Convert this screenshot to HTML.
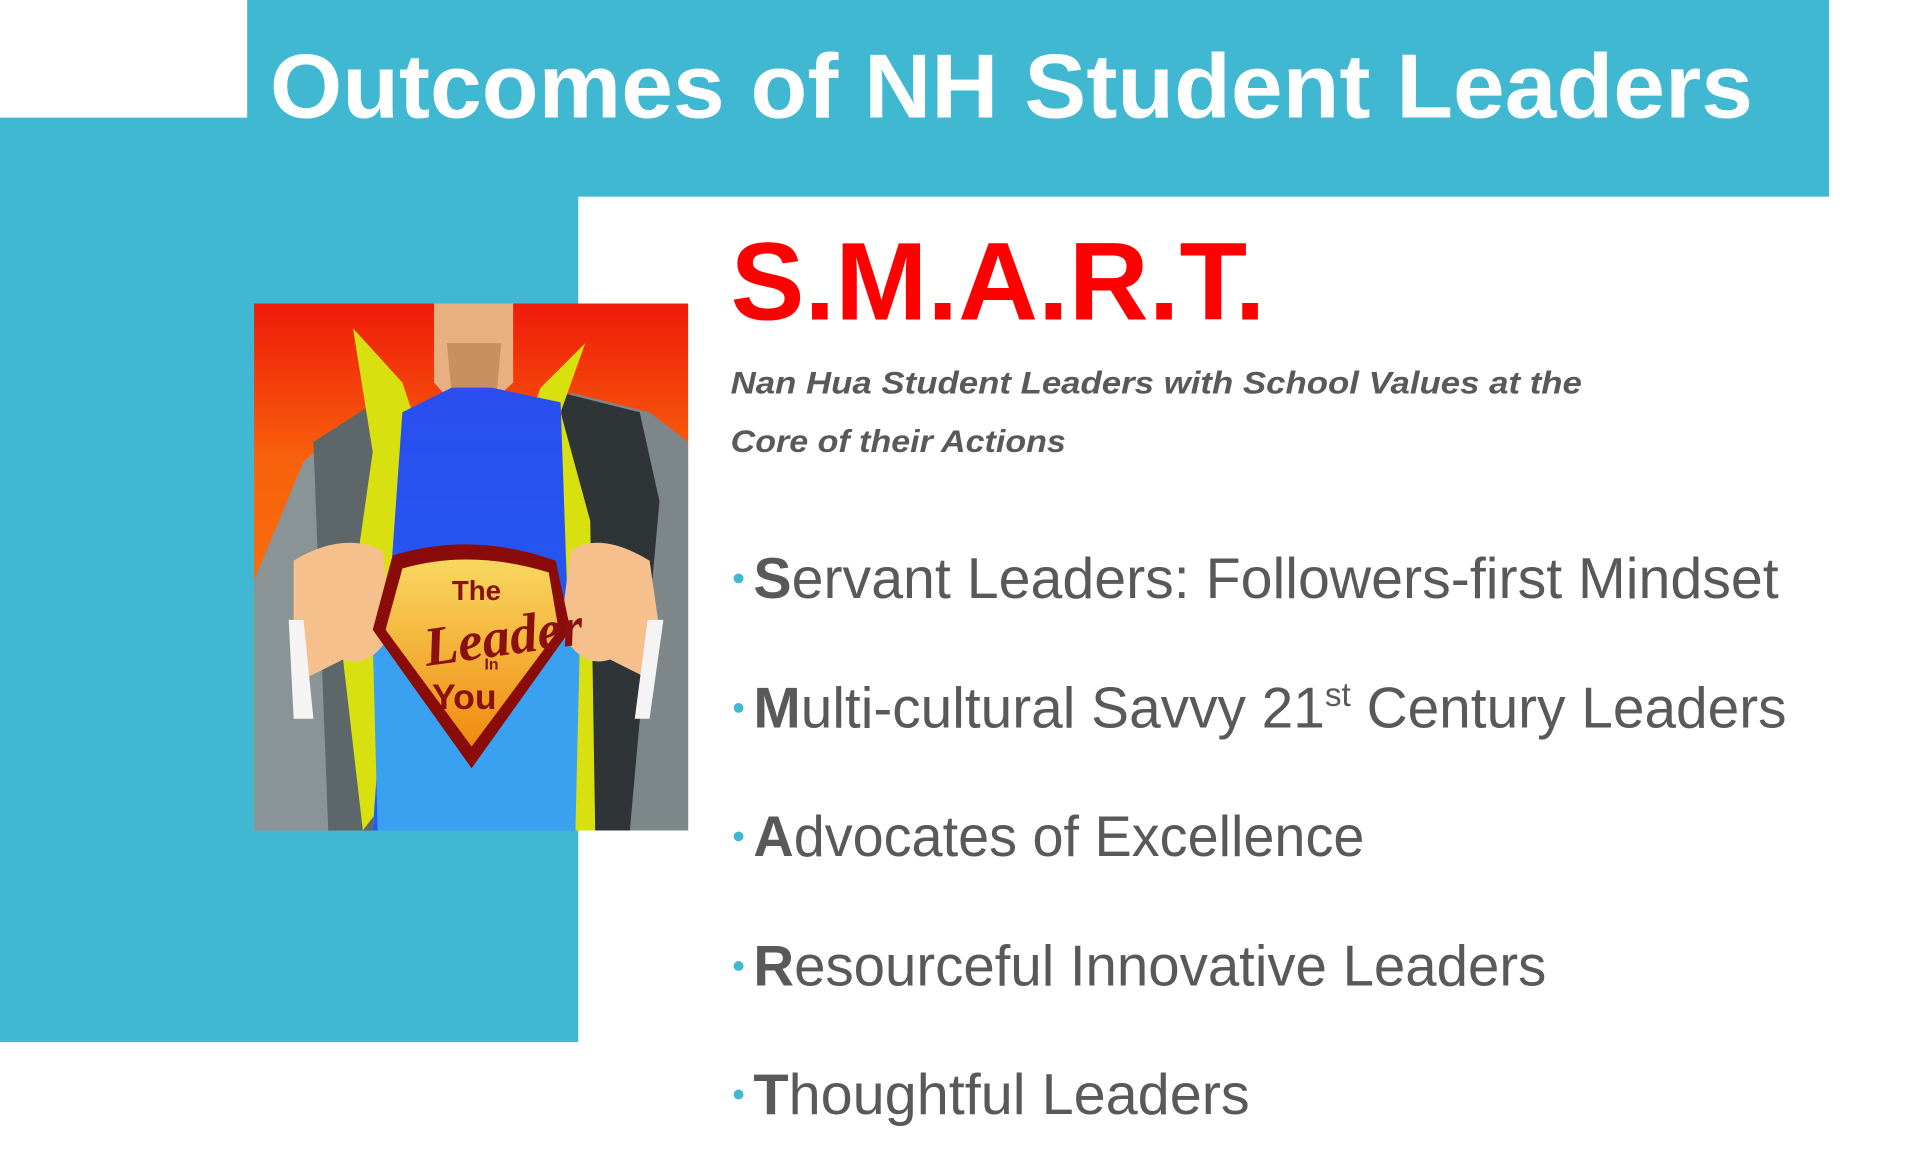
<!DOCTYPE html>
<html><head><meta charset="utf-8"><style>
html,body{margin:0;padding:0;background:#fff;}
svg{display:block}
</style></head><body>
<svg width="1926" height="1159" viewBox="0 0 1926 1159" xmlns="http://www.w3.org/2000/svg">
<rect width="1926" height="1159" fill="#fff"/>
<g transform="scale(0.9887)">
<rect x="250" y="0" width="1600" height="199" fill="#40B8D2"/>
<rect x="0" y="119" width="585" height="935" fill="#40B8D2"/>
<rect x="585" y="199" width="1341" height="960" fill="#fff"/>
<text x="273" y="119" font-family="Liberation Sans, sans-serif" font-weight="bold" font-size="92" fill="#fff" textLength="1500" lengthAdjust="spacingAndGlyphs">Outcomes of NH Student Leaders</text>

<g transform="translate(257,307)">
<defs>
<linearGradient id="bg" x1="0" y1="0" x2="0" y2="1"><stop offset="0" stop-color="#f01a0a"/><stop offset="0.3" stop-color="#f8620c"/><stop offset="1" stop-color="#f88010"/></linearGradient>
<linearGradient id="sh" x1="0" y1="0" x2="0" y2="1"><stop offset="0" stop-color="#2a4ef0"/><stop offset="1" stop-color="#1e60f0"/></linearGradient>
<linearGradient id="bd" x1="0" y1="0" x2="0" y2="1"><stop offset="0" stop-color="#f8d860"/><stop offset="1" stop-color="#f08a10"/></linearGradient>
</defs>
<rect width="439" height="533" fill="url(#bg)"/>
<path d="M0 420 L0 280 L50 160 L120 100 L150 100 L130 533 L0 533 Z" fill="#8a9496"/>
<path d="M60 140 L130 95 L120 533 L75 533 Z" fill="#5d6668"/>
<path d="M439 440 L439 140 L400 110 L320 90 L300 533 L439 533 Z" fill="#7d8789"/>
<path d="M310 90 L390 110 L410 200 L380 533 L330 533 Z" fill="#2f3436"/>
<path d="M100 25 L150 80 L160 110 L135 500 L110 533 L90 360 L120 150 Z" fill="#d8e010"/>
<path d="M335 40 L290 85 L280 110 L320 533 L345 533 L340 220 L310 110 Z" fill="#d8e010"/>
<path d="M182 0 L262 0 L262 80 L240 100 L200 100 L182 80 Z" fill="#e8b080"/>
<path d="M195 40 L250 40 L245 95 L200 95 Z" fill="#c89060"/>
<path d="M150 110 L200 85 L240 85 L310 100 L325 533 L120 533 Z" fill="url(#sh)"/>
<path d="M120 340 L330 320 L325 533 L125 533 Z" fill="#3aa0f0"/>
<path d="M40 260 Q90 230 130 250 L140 330 Q120 370 90 360 L50 380 L40 330 Z" fill="#f5c08c"/>
<path d="M400 260 Q350 230 320 250 L310 330 Q330 370 360 360 L400 380 L410 330 Z" fill="#f5c08c"/>
<path d="M35 320 L50 320 L60 420 L40 420 Z" fill="#f4f4f4"/>
<path d="M398 320 L414 320 L400 420 L385 420 Z" fill="#f4f4f4"/>
<path d="M140 255 Q220 230 305 260 L320 330 L220 470 L120 330 Z" fill="#8a0c0a"/>
<path d="M150 268 Q220 248 298 272 L308 330 L220 448 L133 330 Z" fill="url(#bd)"/>
<text x="170" y="360" font-family="Liberation Serif, serif" font-style="italic" font-weight="bold" font-size="56" fill="#8a1010" transform="rotate(-8 220 330)">Leader</text>
<text x="200" y="300" font-family="Liberation Sans, sans-serif" font-weight="bold" font-size="28" fill="#8a1010">The</text>
<text x="233" y="370" font-family="Liberation Sans, sans-serif" font-weight="bold" font-size="16" fill="#8a1010">In</text>
<text x="180" y="410" font-family="Liberation Sans, sans-serif" font-weight="bold" font-size="36" fill="#8a1010">You</text>
</g>

<text x="739" y="323" font-family="Liberation Sans, sans-serif" font-weight="bold" font-size="112" fill="#ff0000" textLength="541" lengthAdjust="spacingAndGlyphs">S.M.A.R.T.</text>
<g font-family="Liberation Sans, sans-serif" font-weight="bold" font-style="italic" font-size="32" fill="#595959">
<text x="739" y="398" textLength="861" lengthAdjust="spacingAndGlyphs">Nan Hua Student Leaders with School Values at the</text>
<text x="739" y="457" textLength="339" lengthAdjust="spacingAndGlyphs">Core of their Actions</text>
</g>
<g font-family="Liberation Sans, sans-serif" font-size="58" fill="#595959">
<circle cx="747" cy="585" r="5" fill="#40B8D2"/>
<text x="762" y="605" textLength="1037" lengthAdjust="spacingAndGlyphs"><tspan font-weight="bold">S</tspan>ervant Leaders: Followers-first Mindset</text>
<circle cx="747" cy="716" r="5" fill="#40B8D2"/>
<text x="762" y="736" textLength="1045" lengthAdjust="spacingAndGlyphs"><tspan font-weight="bold">M</tspan>ulti-cultural Savvy 21<tspan font-size="34" dy="-22">st</tspan><tspan dy="22"> Century Leaders</tspan></text>
<circle cx="747" cy="846" r="5" fill="#40B8D2"/>
<text x="762" y="866" textLength="618" lengthAdjust="spacingAndGlyphs"><tspan font-weight="bold">A</tspan>dvocates of Excellence</text>
<circle cx="747" cy="977" r="5" fill="#40B8D2"/>
<text x="762" y="997" textLength="802" lengthAdjust="spacingAndGlyphs"><tspan font-weight="bold">R</tspan>esourceful Innovative Leaders</text>
<circle cx="747" cy="1107" r="5" fill="#40B8D2"/>
<text x="762" y="1127" textLength="502" lengthAdjust="spacingAndGlyphs"><tspan font-weight="bold">T</tspan>houghtful Leaders</text>
</g>
</g>
</svg>
</body></html>
